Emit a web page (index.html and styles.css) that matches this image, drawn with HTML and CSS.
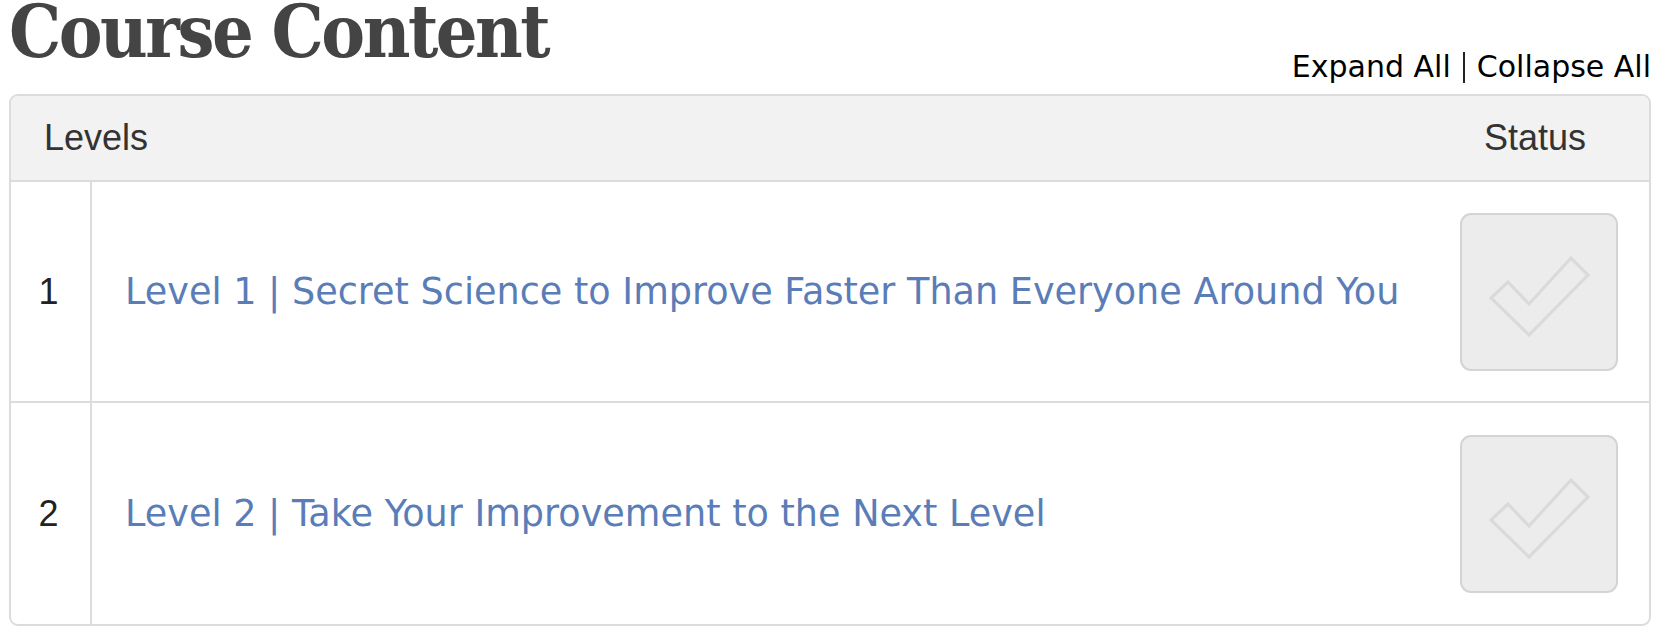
FILE: index.html
```html
<!DOCTYPE html>
<html>
<head>
<meta charset="utf-8">
<link rel="stylesheet" href="styles.css">
</head>
<body>
<div class="page">
  <div class="head">
    <h1 class="title">Course Content</h1>
    <div class="toggles"><a class="toggle">Expand All</a><span class="sep"></span><a class="toggle">Collapse All</a></div>
  </div>
  <div class="box">
    <div class="box-head">
      <div class="h-levels">Levels</div>
      <div class="h-status">Status</div>
    </div>
    <div class="row">
      <div class="num">1</div>
      <div class="name"><a class="link">Level 1 | Secret Science to Improve Faster Than Everyone Around You</a></div>
      <div class="status">
        <div class="check">
          <svg viewBox="2 2 154 154" width="154" height="154"><path d="M48 69 L69 91 L111 45 L128 62 L69 122 L31 85 Z" fill="none" stroke="#dadada" stroke-width="3.2" stroke-linejoin="miter"/></svg>
        </div>
      </div>
    </div>
    <div class="row last">
      <div class="num">2</div>
      <div class="name"><a class="link">Level 2 | Take Your Improvement to the Next Level</a></div>
      <div class="status">
        <div class="check">
          <svg viewBox="2 2 154 154" width="154" height="154"><path d="M48 69 L69 91 L111 45 L128 62 L69 122 L31 85 Z" fill="none" stroke="#dadada" stroke-width="3.2" stroke-linejoin="miter"/></svg>
        </div>
      </div>
    </div>
  </div>
</div>
</body>
</html>
```
FILE: styles.css
```css
html, body {
  margin: 0;
  padding: 0;
  background: #ffffff;
}

.page {
  width: 1658px;
  padding: 0 7px 0 9px;
  box-sizing: border-box;
}

.head {
  display: flex;
  justify-content: space-between;
  height: 94px;
}

.title {
  margin: 0;
  font-family: "DejaVu Serif Condensed", "DejaVu Serif", serif;
  font-stretch: condensed;
  font-weight: 700;
  font-size: 73px;
  line-height: 62px;
  color: #444444;
  letter-spacing: -2.5px;
}

.toggles {
  align-self: flex-end;
  margin-bottom: 11px;
  display: flex;
  align-items: center;
  font-family: "DejaVu Sans", Verdana, sans-serif;
  font-size: 30px;
  line-height: 32px;
  color: #000000;
  margin-right: 0;
}

.sep {
  display: inline-block;
  width: 2px;
  height: 31px;
  background: #222222;
  margin: 0 12px;
}

.box {
  border: 2px solid #dcdcdc;
  border-radius: 9px;
  overflow: hidden;
}

.box-head {
  display: grid;
  grid-template-columns: 1fr 220px;
  align-items: center;
  height: 84px;
  background: #f2f2f2;
  border-bottom: 2px solid #dcdcdc;
  font-family: "Liberation Sans", Arial, sans-serif;
  font-size: 36px;
  color: #333333;
}

.h-levels {
  padding-left: 33px;
}

.h-status {
  text-align: center;
  padding-right: 8px;
}

.row {
  display: grid;
  grid-template-columns: 79px 2px 1fr 220px;
  height: 219px;
  border-bottom: 2px solid #dcdcdc;
  align-items: center;
}

.row.last {
  border-bottom: 0;
  height: 221px;
}

.num {
  grid-column: 1;
  grid-row: 1;
  font-family: "Liberation Sans", Arial, sans-serif;
  font-size: 36px;
  color: #222222;
  text-align: center;
  padding-right: 4px;
}

.row::before {
  content: "";
  grid-column: 2;
  grid-row: 1;
  align-self: stretch;
  background: #dcdcdc;
}

.name {
  grid-column: 3;
  grid-row: 1;
  padding-left: 33px;
}

.link {
  font-family: "DejaVu Sans", Verdana, sans-serif;
  font-size: 36.6px;
  color: #5a7db8;
  text-decoration: none;
}

.status {
  grid-column: 4;
  grid-row: 1;
  display: flex;
  justify-content: center;
}

.check {
  width: 154px;
  height: 154px;
  border: 2px solid #d4d4d4;
  border-radius: 11px;
  background: #ececec;
  display: flex;
}
```
